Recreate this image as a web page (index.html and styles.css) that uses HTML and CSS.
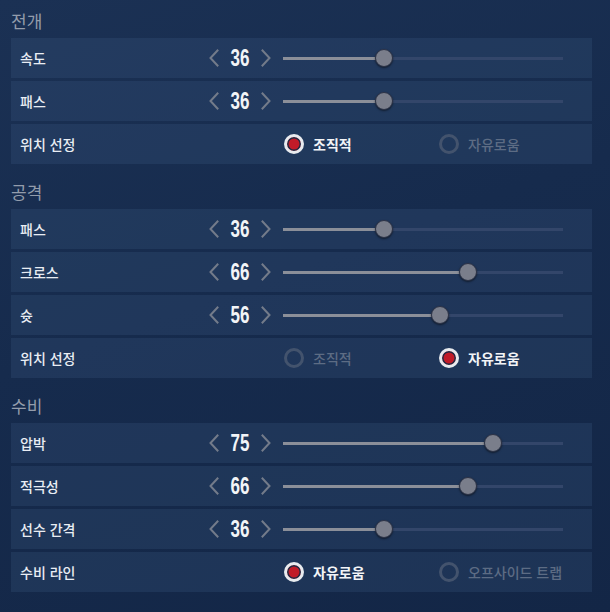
FILE: index.html
```html
<!DOCTYPE html>
<html lang="ko">
	<head>
		<meta charset="utf-8"/>
		<title>전술 설정</title>
		<!-- Page styles -->
		<link rel="stylesheet" href="styles.css">
	</head>
	<body>
		<div class="panel">
			<!-- 전개 -->
			<div class="section">
				<div class="section-title">전개</div>
				<div class="row">
					<span class="label">속도</span>
					<div class="stepper">
						<svg class="chev" viewBox="0 0 10 18"><polyline points="8.5,1.5 1.5,9 8.5,16.5"/></svg>
						<span class="num">36</span>
						<svg class="chev" viewBox="0 0 10 18"><polyline points="1.5,1.5 8.5,9 1.5,16.5"/></svg>
					</div>
					<div class="slider"><div class="fill" style="width:36%"></div><div class="knob" style="left:36%"></div></div>
				</div>
				<div class="row">
					<span class="label">패스</span>
					<div class="stepper">
						<svg class="chev" viewBox="0 0 10 18"><polyline points="8.5,1.5 1.5,9 8.5,16.5"/></svg>
						<span class="num">36</span>
						<svg class="chev" viewBox="0 0 10 18"><polyline points="1.5,1.5 8.5,9 1.5,16.5"/></svg>
					</div>
					<div class="slider"><div class="fill" style="width:36%"></div><div class="knob" style="left:36%"></div></div>
				</div>
				<div class="row">
					<span class="label">위치 선정</span>
					<div class="radios">
						<div class="option checked"><span class="dot"></span>조직적</div>
						<div class="option"><span class="dot"></span>자유로움</div>
					</div>
				</div>
			</div>
			<!-- 공격 -->
			<div class="section">
				<div class="section-title">공격</div>
				<div class="row">
					<span class="label">패스</span>
					<div class="stepper">
						<svg class="chev" viewBox="0 0 10 18"><polyline points="8.5,1.5 1.5,9 8.5,16.5"/></svg>
						<span class="num">36</span>
						<svg class="chev" viewBox="0 0 10 18"><polyline points="1.5,1.5 8.5,9 1.5,16.5"/></svg>
					</div>
					<div class="slider"><div class="fill" style="width:36%"></div><div class="knob" style="left:36%"></div></div>
				</div>
				<div class="row">
					<span class="label">크로스</span>
					<div class="stepper">
						<svg class="chev" viewBox="0 0 10 18"><polyline points="8.5,1.5 1.5,9 8.5,16.5"/></svg>
						<span class="num">66</span>
						<svg class="chev" viewBox="0 0 10 18"><polyline points="1.5,1.5 8.5,9 1.5,16.5"/></svg>
					</div>
					<div class="slider"><div class="fill" style="width:66%"></div><div class="knob" style="left:66%"></div></div>
				</div>
				<div class="row">
					<span class="label">슛</span>
					<div class="stepper">
						<svg class="chev" viewBox="0 0 10 18"><polyline points="8.5,1.5 1.5,9 8.5,16.5"/></svg>
						<span class="num">56</span>
						<svg class="chev" viewBox="0 0 10 18"><polyline points="1.5,1.5 8.5,9 1.5,16.5"/></svg>
					</div>
					<div class="slider"><div class="fill" style="width:56%"></div><div class="knob" style="left:56%"></div></div>
				</div>
				<div class="row">
					<span class="label">위치 선정</span>
					<div class="radios">
						<div class="option"><span class="dot"></span>조직적</div>
						<div class="option checked"><span class="dot"></span>자유로움</div>
					</div>
				</div>
			</div>
			<!-- 수비 -->
			<div class="section">
				<div class="section-title">수비</div>
				<div class="row">
					<span class="label">압박</span>
					<div class="stepper">
						<svg class="chev" viewBox="0 0 10 18"><polyline points="8.5,1.5 1.5,9 8.5,16.5"/></svg>
						<span class="num">75</span>
						<svg class="chev" viewBox="0 0 10 18"><polyline points="1.5,1.5 8.5,9 1.5,16.5"/></svg>
					</div>
					<div class="slider"><div class="fill" style="width:75%"></div><div class="knob" style="left:75%"></div></div>
				</div>
				<div class="row">
					<span class="label">적극성</span>
					<div class="stepper">
						<svg class="chev" viewBox="0 0 10 18"><polyline points="8.5,1.5 1.5,9 8.5,16.5"/></svg>
						<span class="num">66</span>
						<svg class="chev" viewBox="0 0 10 18"><polyline points="1.5,1.5 8.5,9 1.5,16.5"/></svg>
					</div>
					<div class="slider"><div class="fill" style="width:66%"></div><div class="knob" style="left:66%"></div></div>
				</div>
				<div class="row">
					<span class="label">선수 간격</span>
					<div class="stepper">
						<svg class="chev" viewBox="0 0 10 18"><polyline points="8.5,1.5 1.5,9 8.5,16.5"/></svg>
						<span class="num">36</span>
						<svg class="chev" viewBox="0 0 10 18"><polyline points="1.5,1.5 8.5,9 1.5,16.5"/></svg>
					</div>
					<div class="slider"><div class="fill" style="width:36%"></div><div class="knob" style="left:36%"></div></div>
				</div>
				<div class="row">
					<span class="label">수비 라인</span>
					<div class="radios">
						<div class="option checked"><span class="dot"></span>자유로움</div>
						<div class="option"><span class="dot"></span>오프사이드 트랩</div>
					</div>
				</div>
			</div>
		</div>
	</body>
</html>
```
FILE: styles.css
```css
/*Basic body design*/
body {
	background: linear-gradient(160deg, #1b3154 0%, #162b4d 45%, #132646 100%);
	font-family: "Noto Sans CJK KR", "Noto Sans", sans-serif;
	height: 612px;
	margin: 0;
	overflow: hidden;
}

/*Panel holding every section*/
div.panel {
	padding-left: 11px;
	width: 581px;
}

/*One section*/
div.section {
	flex-direction: column;
	margin-bottom: 7px;
	display: flex;
	gap: 3px;
}

/*Section title*/
div.section-title {
	box-sizing: border-box;
	align-items: center;
	margin-bottom: -3px;
	padding-top: 2px;
	font-size: 17px;
	color: #939cab;
	display: flex;
	height: 38px;
}

/*Settings row*/
div.row {
	background-color: rgba(70, 100, 140, 0.22);
	padding: 0 29px 0 9px;
	align-items: center;
	display: flex;
	height: 40px;
}

/*Row label*/
span.label {
	font-weight: 500;
	font-size: 14px;
	color: #e9edf3;
	flex: 1;
}

/*Value stepper*/
div.stepper {
	align-items: center;
	margin-right: 12px;
	display: flex;
	width: 62px;
}

div.stepper svg.chev {
	stroke-linecap: square;
	stroke-width: 2;
	stroke: #737b8a;
	fill: none;
	height: 18px;
	width: 10px;
}

div.stepper span.num {
	font-family: "Liberation Sans", "Arimo", sans-serif;
	transform: scaleX(0.74);
	display: inline-block;
	text-align: center;
	font-weight: bold;
	font-size: 23px;
	color: #f2f4f7;
	width: 42px;
}

/*Slider*/
div.slider {
	background-color: #33466a;
	position: relative;
	height: 3px;
	width: 280px;
}

div.slider div.fill {
	background-color: #8b8f99;
	height: 100%;
}

div.slider div.knob {
	transform: translate(-50%, -50%);
	box-shadow: 0 1px 2px rgba(0, 0, 0, 0.5);
	background-color: #7a7e8b;
	border: 1px solid #2b3246;
	border-radius: 50%;
	position: absolute;
	height: 16px;
	width: 16px;
	top: 50%;
}

/*Radio group*/
div.radios {
	margin-right: -29px;
	display: flex;
	width: 309px;
}

div.option {
	align-items: center;
	white-space: nowrap;
	font-weight: 500;
	font-size: 14px;
	color: #5d6c84;
	display: flex;
	flex: none;
	width: 155px;
	gap: 9px;
}

div.option span.dot {
	border: 3px solid #43536d;
	box-sizing: border-box;
	border-radius: 50%;
	margin-left: 1px;
	height: 20px;
	width: 20px;
}

div.option.checked {
	font-weight: bold;
	color: #f2f4f7;
}

div.option.checked span.dot {
	box-shadow: inset 0 0 0 1.5px #1c2a44;
	background-color: #c11b28;
	border-color: #e8ebef;
}
```
